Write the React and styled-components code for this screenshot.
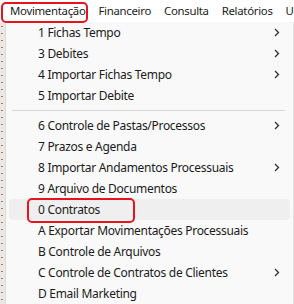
import React from "react";
import styled, { createGlobalStyle } from "styled-components";

const Global = createGlobalStyle`
  html, body { margin: 0; padding: 0; background: #ffffff; overflow: hidden; }
  body { font-family: "Noto Sans", "Open Sans", sans-serif; }
`;

const Page = styled.div`
  position: relative;
  width: 294px;
  height: 304px;
  overflow: hidden;
  background: #ffffff;
  color: #1b1b1b;
  font-size: 12px;
  letter-spacing: -0.3px;
`;

const MenuBar = styled.div`
  display: flex;
  align-items: center;
  height: 22px;
  padding-left: 3.5px;
  background: #ffffff;
  white-space: nowrap;
  font-size: 11.4px;
  letter-spacing: -0.3px;
`;

const BarItem = styled.div`
  position: relative;
  padding: 0 6.5px;
  line-height: 22px;
`;

const Annotation = styled.div`
  position: absolute;
  border: 2px solid #e8141c;
  border-radius: 5px;
  pointer-events: none;
  box-sizing: border-box;
`;

const Body = styled.div`
  display: flex;
  height: 282px;
`;

const AppStrip = styled.div`
  width: 5px;
  flex: none;
  background:
    repeating-linear-gradient(180deg, transparent 0 4px, #c8703a 4px 5px, transparent 5px 7px),
    #e9e9e9;
  background-size: 2px 100%, 100%;
  background-repeat: repeat-y, no-repeat;
  background-position: 1px 0, 0 0;
`;

const Popup = styled.div`
  flex: 1;
  background: #f9f9f9;
  border-left: 1px solid #dcdcdc;
  border-right: 1px solid #e2e2e2;
  padding: 0 3px;
`;

const Item = styled.div`
  position: relative;
  display: flex;
  align-items: center;
  height: 21px;
  padding-left: 29px;
  padding-right: 10px;
  border-radius: 4px;
  background: ${(p) => (p.$active ? "#efefef" : "transparent")};
  white-space: nowrap;
`;

const Label = styled.span`
  flex: 1;
`;

const Separator = styled.div`
  height: 1px;
  margin: 4px 5px 4px 3px;
  background: #d6d6d6;
`;

const Chevron = () => (
  <svg width="6" height="9" viewBox="0 0 6 9">
    <path d="M1 1 L4.5 4.5 L1 8" fill="none" stroke="#303030" strokeWidth="1.3" />
  </svg>
);

const groups = [
  [
    { t: "1 Fichas Tempo", sub: true },
    { t: "3 Debites", sub: true },
    { t: "4 Importar Fichas Tempo", sub: true },
    { t: "5 Importar Debite" },
  ],
  [
    { t: "6 Controle de Pastas/Processos", sub: true },
    { t: "7 Prazos e Agenda" },
    { t: "8 Importar Andamentos Processuais", sub: true },
    { t: "9 Arquivo de Documentos" },
    { t: "0 Contratos", active: true, marked: true },
    { t: "A Exportar Movimentações Processuais" },
    { t: "B Controle de Arquivos" },
    { t: "C Controle de Contratos de Clientes", sub: true },
    { t: "D Email Marketing" },
  ],
];

export default function App() {
  return (
    <Page>
      <Global />
      <MenuBar>
        <BarItem>
          Movimentação
          <Annotation style={{ left: -2.5, top: 2, width: 87, height: 21 }} />
        </BarItem>
        <BarItem>Financeiro</BarItem>
        <BarItem>Consulta</BarItem>
        <BarItem>Relatórios</BarItem>
        <BarItem>U</BarItem>
      </MenuBar>
      <Body>
        <AppStrip />
        <Popup>
          {groups.map((g, gi) => (
            <React.Fragment key={gi}>
              {gi > 0 && <Separator />}
              {g.map((it) => (
                <Item key={it.t} $active={it.active}>
                  <Label>{it.t}</Label>
                  {it.sub && <Chevron />}
                  {it.marked && (
                    <Annotation style={{ left: 18, top: -1, width: 108, height: 25 }} />
                  )}
                </Item>
              ))}
            </React.Fragment>
          ))}
        </Popup>
      </Body>
    </Page>
  );
}
